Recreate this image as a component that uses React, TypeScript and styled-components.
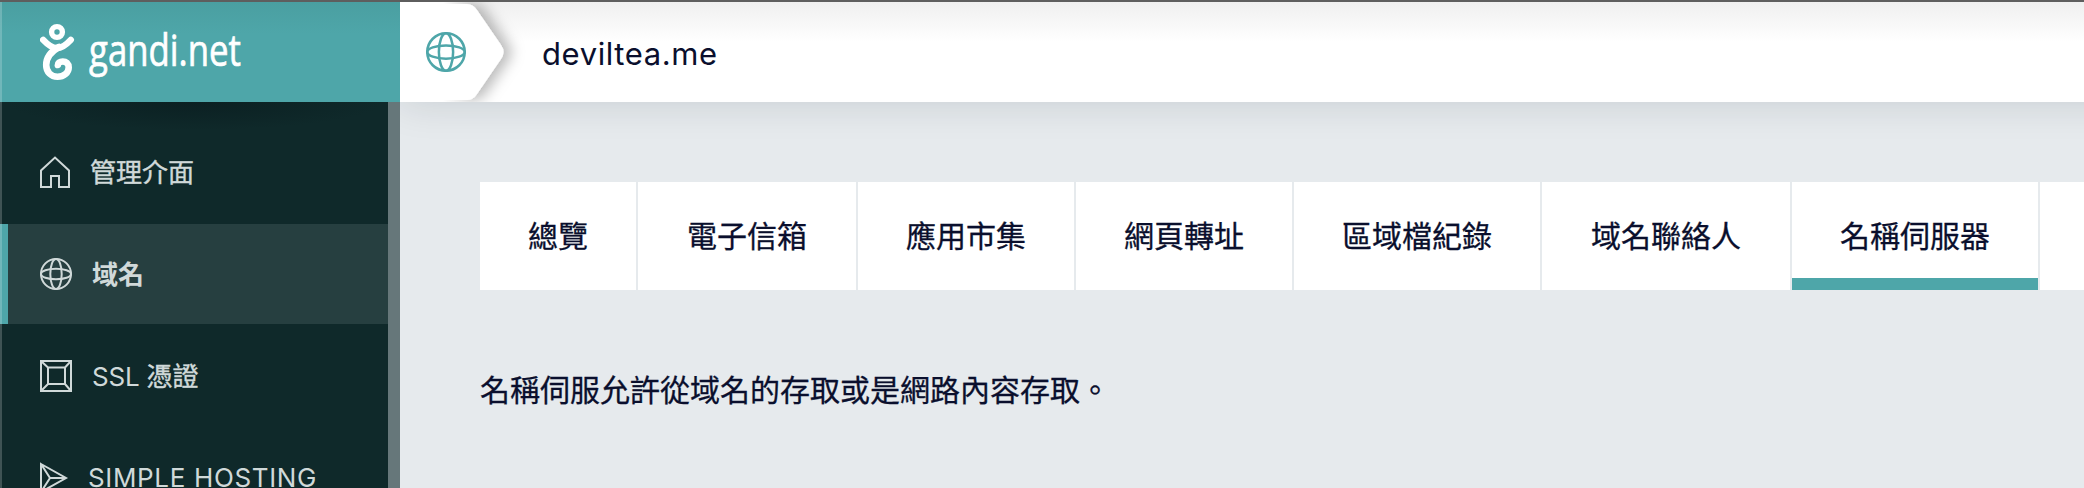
import React from "react";
import styled, { createGlobalStyle } from "styled-components";

const teal = "#4ea6a9";
const ink = "#0a0f2d";
const pale = "#d0d9d9";

const GlobalStyle = createGlobalStyle`
  * { box-sizing: border-box; }
  html, body { margin: 0; overflow: hidden; }
  body {
    font-family: Inter, "Noto Sans CJK TC", sans-serif;
    color: ${ink};
    background: #e6eaed;
  }
`;

const Page = styled.div`
  position: relative;
  display: flex;
  width: 2084px;
  height: 488px;
  overflow: hidden;
  border-top: 2px solid #5e5e5e;
`;

const EdgeLine = styled.div`
  position: absolute;
  inset: 0 auto 0 0;
  width: 2px;
  z-index: 5;
  background: rgba(255, 255, 255, 0.2);
`;

const Sidebar = styled.aside`
  position: relative;
  z-index: 1;
  width: 400px;
  flex: none;
  display: flex;
  flex-direction: column;
`;

const Brand = styled.div`
  height: 100px;
  flex: none;
  display: flex;
  align-items: center;
  padding-left: 40px;
  background: linear-gradient(#4a9fa1, ${teal} 32px);
`;

const SideBody = styled.div`
  flex: 1;
  min-height: 0;
  display: flex;
`;

const Menu = styled.nav`
  width: 388px;
  padding-top: 20px;
  overflow: hidden;
  background: radial-gradient(ellipse 190px 28px at 50% 0, #0b2022, rgba(11, 32, 34, 0)) #0f292a;
`;

const ScrollBar = styled.div`
  width: 12px;
  background: #66777a;
`;

const MenuItem = styled.a<{ $active?: boolean }>`
  display: flex;
  align-items: center;
  height: 100px;
  margin-bottom: 2px;
  border-left: 8px solid ${(p) => (p.$active ? teal : "transparent")};
  padding-left: 32px;
  background: ${(p) => (p.$active ? "#263f40" : "transparent")};
  color: ${pale};
  font-size: 26px;
  font-weight: ${(p) => (p.$active ? 700 : 400)};
  -webkit-text-stroke: ${(p) => (p.$active ? 0 : 0.4)}px ${pale};
  white-space: nowrap;
`;

const MenuIcon = styled.svg`
  width: 32px;
  height: 32px;
  flex: none;
  fill: none;
  stroke: ${pale};
  stroke-width: 2;
`;

const MenuLabel = styled.span<{ $gap?: number; $drop?: number }>`
  margin-left: ${(p) => p.$gap ?? 18}px;
  margin-bottom: ${(p) => p.$drop ?? 4}px;
`;

const Latin = styled.span<{ $spacing: number }>`
  letter-spacing: ${(p) => p.$spacing}px;
  -webkit-text-stroke: 0;
`;

const Main = styled.main`
  flex: 1;
  min-width: 0;
`;

const Header = styled.header`
  height: 100px;
  margin-right: -60px;
  display: flex;
  align-items: center;
  background: linear-gradient(#efefef, #fff 40px);
  box-shadow: 0 0 40px rgba(10, 30, 40, 0.14);
`;

const Crumb = styled.svg`
  width: 142px;
  height: 100px;
  flex: none;
`;

const Domain = styled.h1`
  margin: 2px 0 0;
  font-size: 31px;
  font-weight: 400;
  letter-spacing: 0.6px;
`;

const Content = styled.section`
  padding: 80px 0 0 80px;
`;

const Tabs = styled.div`
  display: flex;
  gap: 2px;
  height: 108px;
`;

const Tab = styled.a<{ $width: number; $active?: boolean }>`
  flex: none;
  width: ${(p) => p.$width}px;
  display: flex;
  align-items: center;
  justify-content: center;
  padding-bottom: 4px;
  background: #fff;
  box-shadow: ${(p) => (p.$active ? `inset 0 -12px ${teal}` : "none")};
  font-size: 30px;
  -webkit-text-stroke: 0.3px ${ink};
  white-space: nowrap;
`;

const Intro = styled.p`
  margin: 78px 0 0;
  font-size: 30px;
  line-height: 44px;
  -webkit-text-stroke: 0.3px ${ink};
`;

const tabs = [
  { label: "總覽", width: 156 },
  { label: "電子信箱", width: 218 },
  { label: "應用市集", width: 216 },
  { label: "網頁轉址", width: 216 },
  { label: "區域檔紀錄", width: 246 },
  { label: "域名聯絡人", width: 248 },
  { label: "名稱伺服器", width: 246, active: true },
  { label: "", width: 120 },
];

const GlobeShape = () => (
  <>
    <circle cx="16" cy="16" r="15" />
    <ellipse cx="16" cy="16" rx="5.7" ry="15" />
    <ellipse cx="16" cy="16" rx="15" ry="5.3" />
  </>
);

const Logo = () => (
  <svg width="230" height="100" viewBox="40 2 230 100" fill="none" stroke="#fff">
    <circle cx="57" cy="32" r="5.4" strokeWidth="5.4" />
    <path d="M43.200 39.800C48 45 52 48 57 48S66 45 70.800 39.800" strokeWidth="6.4" strokeLinecap="round" />
    <path
      d="M59 47C51 51.500 46.200 56.500 46.200 65C46.200 72 51 76.700 57.500 76.700C64 76.700 68.700 72.500 68.700 67.500C68.700 63.500 66 61.500 62.800 61.500C59.500 61.500 57.600 63.300 57.800 65"
      strokeWidth="6.6"
      strokeLinecap="round"
    />
    <text
      x="89"
      y="65.500"
      fill="#fff"
      strokeWidth="0.7"
      fontFamily="Open Sans"
      fontSize="43"
      textLength="152"
      lengthAdjust="spacingAndGlyphs"
    >
      gandi.net
    </text>
  </svg>
);

export default function App() {
  return (
    <>
      <GlobalStyle />
      <Page>
        <EdgeLine />
        <Sidebar>
          <Brand>
            <Logo />
          </Brand>
          <SideBody>
            <Menu>
              <MenuItem>
                <MenuIcon viewBox="0 0 32 32">
                  <path d="M1 31V14.500L15 1.500L29 14.500V31H19V20H11V31Z" />
                </MenuIcon>
                <MenuLabel>管理介面</MenuLabel>
              </MenuItem>
              <MenuItem $active>
                <MenuIcon viewBox="0 0 32 32">
                  <GlobeShape />
                </MenuIcon>
                <MenuLabel $gap={20}>域名</MenuLabel>
              </MenuItem>
              <MenuItem>
                <MenuIcon viewBox="0 0 32 32">
                  <path d="M1 1H31V31H1ZM8 7.500H25V24H8ZM1 1L8 7.500M31 1L25 7.500M1 31L8 24M31 31L25 24" />
                </MenuIcon>
                <MenuLabel $gap={20}>
                  <Latin $spacing={-0.2}>SSL </Latin>憑證
                </MenuLabel>
              </MenuItem>
              <MenuItem>
                <MenuIcon viewBox="0 0 32 32">
                  <path d="M1 2L26 16L1 30ZM1 2L10 16L1 30M10 16H26" />
                </MenuIcon>
                <MenuLabel $gap={16} $drop={1}>
                  <Latin $spacing={0.65}>SIMPLE HOSTING</Latin>
                </MenuLabel>
              </MenuItem>
            </Menu>
            <ScrollBar />
          </SideBody>
        </Sidebar>
        <Main>
          <Header>
            <Crumb viewBox="0 0 142 100">
              <defs>
                <filter id="arrowShadow" x="-30%" y="-30%" width="170%" height="160%">
                  <feDropShadow dx="8" dy="0" stdDeviation="7" floodColor="#000" floodOpacity="0.27" />
                </filter>
                <linearGradient id="arrowFade">
                  <stop offset="0.6" stopColor="#fff" />
                  <stop offset="1" stopColor="#fff" stopOpacity="0" />
                </linearGradient>
              </defs>
              <path
                d="M0 2H67Q73 2 77 8L101 43Q106 50 101 57L77 92Q73 98 67 98H0Z"
                fill="#fff"
                filter="url(#arrowShadow)"
              />
              <path d="M0 0H72V100H0Z" fill="url(#arrowFade)" />
              <g transform="translate(26 30) scale(1.25)" fill="none" stroke={teal} strokeWidth="2">
                <GlobeShape />
              </g>
            </Crumb>
            <Domain>deviltea.me</Domain>
          </Header>
          <Content>
            <Tabs>
              {tabs.map((t) => (
                <Tab key={t.label} $width={t.width} $active={t.active}>
                  {t.label}
                </Tab>
              ))}
            </Tabs>
            <Intro>名稱伺服允許從域名的存取或是網路內容存取。</Intro>
          </Content>
        </Main>
      </Page>
    </>
  );
}
